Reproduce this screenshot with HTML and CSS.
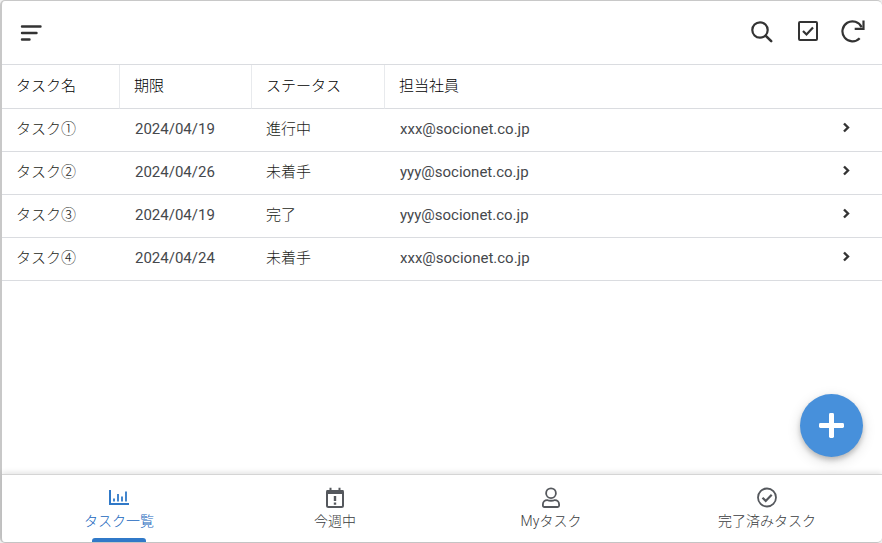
FILE: index.html
```
<!DOCTYPE html>
<html lang="ja">
<head>
    <meta charset="UTF-8">
    <meta name="viewport" content="width=device-width, initial-scale=1.0">
    <title>タスク一覧</title>
    <link rel="stylesheet" href="styles.css">
</head>
<body>
    <div class="app">
        <header class="toolbar">
            <button type="button" class="icon-btn" aria-label="メニュー">
                <svg width="22" height="22" viewBox="0 0 22 22" fill="none" stroke="currentColor" stroke-width="2.4" stroke-linecap="round">
                    <path d="M2 5.5h18.5M2 12h14.5M2 18.5h7.5"/>
                </svg>
            </button>
            <div class="toolbar-actions">
                <button type="button" class="icon-btn" aria-label="検索">
                    <svg width="24" height="24" viewBox="0 0 24 24" fill="none" stroke="currentColor" stroke-linecap="round">
                        <circle cx="9" cy="10" r="7.7" stroke-width="2.2"/>
                        <path d="M14.8 15.8l5.400 5.400" stroke-width="2.600"/>
                    </svg>
                </button>
                <button type="button" class="icon-btn" aria-label="選択">
                    <svg width="22" height="22" viewBox="0 0 22 22" fill="none" stroke="currentColor" stroke-width="2">
                        <rect x="2" y="1" width="18" height="18" rx="1"/>
                        <path d="M6 10l3.500 3.500 6.500-7" stroke-width="2.200"/>
                    </svg>
                </button>
                <button type="button" class="icon-btn" aria-label="更新">
                    <svg width="24" height="24" viewBox="0 0 24 24" fill="none" stroke="currentColor" stroke-width="2.200">
                        <path d="M18.700 18.200A10 10 0 1 1 20.600 7.300"/>
                        <path d="M22.500 .5v8.300h-8.800"/>
                    </svg>
                </button>
            </div>
        </header>

        <main class="content">
            <table class="tasks">
                <colgroup>
                    <col class="col-name">
                    <col class="col-date">
                    <col class="col-status">
                    <col>
                    <col class="col-open">
                </colgroup>
                <thead>
                    <tr>
                        <th>タスク名</th>
                        <th>期限</th>
                        <th>ステータス</th>
                        <th colspan="2">担当社員</th>
                    </tr>
                </thead>
                <tbody>
                    <tr>
                        <td>タスク①</td>
                        <td class="latin">2024/04/19</td>
                        <td>進行中</td>
                        <td class="latin">xxx@socionet.co.jp</td>
                        <td><button type="button" class="open-btn" aria-label="タスク①を開く"><svg width="10" height="12" viewBox="0 0 10 12"><path d="M2 1.500l4 4-4 4"/></svg></button></td>
                    </tr>
                    <tr>
                        <td>タスク②</td>
                        <td class="latin">2024/04/26</td>
                        <td>未着手</td>
                        <td class="latin">yyy@socionet.co.jp</td>
                        <td><button type="button" class="open-btn" aria-label="タスク②を開く"><svg width="10" height="12" viewBox="0 0 10 12"><path d="M2 1.500l4 4-4 4"/></svg></button></td>
                    </tr>
                    <tr>
                        <td>タスク③</td>
                        <td class="latin">2024/04/19</td>
                        <td>完了</td>
                        <td class="latin">yyy@socionet.co.jp</td>
                        <td><button type="button" class="open-btn" aria-label="タスク③を開く"><svg width="10" height="12" viewBox="0 0 10 12"><path d="M2 1.500l4 4-4 4"/></svg></button></td>
                    </tr>
                    <tr>
                        <td>タスク④</td>
                        <td class="latin">2024/04/24</td>
                        <td>未着手</td>
                        <td class="latin">xxx@socionet.co.jp</td>
                        <td><button type="button" class="open-btn" aria-label="タスク④を開く"><svg width="10" height="12" viewBox="0 0 10 12"><path d="M2 1.500l4 4-4 4"/></svg></button></td>
                    </tr>
                </tbody>
            </table>

            <button type="button" class="add-btn" aria-label="追加">
                <svg width="25" height="25" viewBox="0 0 25 25" fill="currentColor">
                    <rect x="0" y="10" width="25" height="5" rx="1.400"/>
                    <rect x="10" y="0" width="5" height="25" rx="1.400"/>
                </svg>
            </button>
        </main>

        <nav class="tabs">
            <a href="#list" class="tab active" aria-current="page">
                <svg width="22" height="22" viewBox="0 0 22 22" fill="none" stroke="currentColor" stroke-width="2">
                    <path d="M2 3v14h19"/>
                    <path d="M6 14.500v-3M10 14.500V7M14 14.500v-5M18 14.500V4.500" stroke-width="1.800"/>
                </svg>
                <span>タスク一覧</span>
            </a>
            <a href="#week" class="tab">
                <svg width="22" height="22" viewBox="0 0 22 22" fill="none" stroke="currentColor" stroke-width="2">
                    <rect x="3" y="4" width="16" height="16" rx="1.500"/>
                    <path d="M2.500 5h17" stroke-width="4"/>
                    <path d="M6.500 4V.8M15.500 4V.8"/>
                    <path d="M11 9v5M11 15.500v2.300" stroke-width="2.400"/>
                </svg>
                <span>今週中</span>
            </a>
            <a href="#my" class="tab">
                <svg width="22" height="22" viewBox="0 0 22 22" fill="none" stroke="currentColor" stroke-width="1.800">
                    <circle cx="11" cy="6.200" r="4.900"/>
                    <path d="M7.600 13.200c1.500.7 5.300.7 6.800 0 2.700-.2 4.700 1.300 4.700 4v1.300q0 1.500-1.500 1.500H4.400q-1.500 0-1.500-1.500v-1.300c0-2.700 2-4.200 4.700-4z"/>
                </svg>
                <span>Myタスク</span>
            </a>
            <a href="#done" class="tab">
                <svg width="22" height="22" viewBox="0 0 22 22" fill="none" stroke="currentColor" stroke-width="1.800">
                    <circle cx="11" cy="10.500" r="9"/>
                    <path d="M6.500 10.700l3.200 3.200 6-6.200" stroke-width="2.200"/>
                </svg>
                <span>完了済みタスク</span>
            </a>
        </nav>
    </div>
</body>
</html>
```

FILE: styles.css
```
html {
    box-sizing: border-box;
    font-family: Roboto, "Noto Sans CJK JP", sans-serif;
    font-size: 15px;
    font-weight: 300;
}

*, *::after, *::before {
    box-sizing: inherit;
}

body {
    margin: 0;
    background-color: #f0f0f0;
}

button {
    padding: 0;
    border: 0;
    background: none;
    color: inherit;
    cursor: pointer;
}

svg {
    display: block;
}

.app {
    display: flex;
    flex-direction: column;
    min-height: 100vh;
    border: 1px solid #c8c8c8;
    border-left-width: 2px;
    border-right: 0;
    border-radius: 5px;
    background-color: #fff;
    color: #1c1e20;
}

/* toolbar */
.toolbar {
    display: flex;
    align-items: center;
    justify-content: space-between;
    height: 64px;
    padding: 0 17px 2px 18px;
    border-bottom: 1px solid #dadce0;
    color: #333;
}

.toolbar-actions {
    display: flex;
    align-items: center;
    gap: 22px;
}

/* task table */
.content {
    position: relative;
    flex: 1;
}

.tasks {
    width: 100%;
    border-collapse: separate;
    border-spacing: 0;
    table-layout: fixed;
}

.col-name {
    width: 118px;
}

.col-date {
    width: 132px;
}

.col-status {
    width: 133px;
}

.col-open {
    width: 72px;
}

.tasks th,
.tasks td {
    height: 43px;
    padding: 0 14px 2px;
    border-bottom: 1px solid #dadce0;
    text-align: left;
    font-weight: 300;
    line-height: 20px;
}

.tasks th {
    height: 44px;
    border-right: 1px solid #e8eaed;
    color: #000;
}

.tasks th:last-child {
    border-right: 0;
}

.tasks .latin {
    padding-left: 15px;
    color: #45484c;
    font-weight: 400;
}

.tasks td:last-child {
    padding: 0 32px 2px;
}

.open-btn svg {
    fill: none;
    stroke: #333;
    stroke-width: 2.4;
}

.add-btn {
    position: absolute;
    right: 19px;
    bottom: 17px;
    display: flex;
    align-items: center;
    justify-content: center;
    width: 63px;
    height: 63px;
    border-radius: 50%;
    background-color: #4790db;
    color: #fff;
    box-shadow: 0 3px 5px rgba(0, 0, 0, .2), 0 4px 14px rgba(0, 0, 0, .14);
}

/* bottom tabs */
.tabs {
    display: flex;
    height: 68px;
    padding: 0 7px 0 9px;
    border-top: 1px solid #d5d5d5;
    box-shadow: 0 -2px 5px rgba(0, 0, 0, .1);
}

.tab {
    display: flex;
    flex: 1;
    flex-direction: column;
    align-items: center;
    padding-top: 12px;
    color: #55585d;
    font-size: 14px;
    line-height: 24px;
    text-decoration: none;
}

.tab span {
    color: #3a3c40;
}

.tab.active,
.tab.active::after {
    color: #3079c8;
}

.tab.active span {
    color: #1766bd;
}

.tab.active::after {
    content: "";
    width: 54px;
    height: 4px;
    margin-top: auto;
    border-radius: 3px 3px 0 0;
    background-color: #3079c8;
}
```
